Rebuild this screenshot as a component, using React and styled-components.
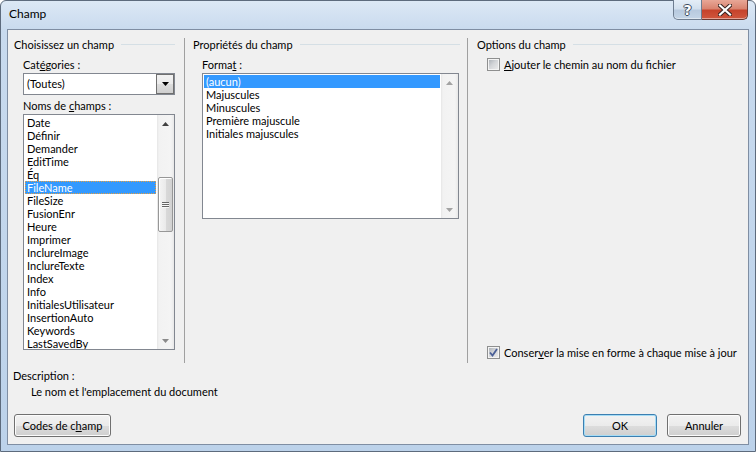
import styled, { createGlobalStyle } from "styled-components";

const GlobalStyle = createGlobalStyle`
  html, body {
    margin: 0;
    padding: 0;
  }
  body {
    width: 756px;
    height: 452px;
    overflow: hidden;
    font-family: Lato, "Noto Sans", sans-serif;
    font-size: 11px;
    color: #000;
  }
  #root {
    width: 756px;
    height: 452px;
  }
`;

const Window = styled.div`
  box-sizing: border-box;
  width: 756px;
  height: 452px;
  display: flex;
  flex-direction: column;
  border: 1px solid #5d6b7d;
  border-radius: 6px 6px 0 0;
  background: linear-gradient(to bottom, #dce8f5 0, #c8daee 30px, #bcd2ea 100%);
  padding: 0 6px 6px 6px;
`;

const TitleBar = styled.div`
  height: 28px;
  display: flex;
  align-items: flex-start;
  justify-content: space-between;
  margin-right: 1px;
`;

const Title = styled.span`
  font-size: 12px;
  line-height: 12px;
  margin: 7px 0 0 2px;
`;

const CaptionGroup = styled.div`
  display: flex;
  margin-top: -1px;
`;

const CaptionButton = styled.div`
  box-sizing: border-box;
  width: ${(p) => (p.$close ? "46px" : "29px")};
  height: 20px;
  display: flex;
  align-items: center;
  justify-content: center;
  border: 1px solid ${(p) => (p.$close ? "#6b3a33" : "#6e7d90")};
  border-top: none;
  border-left: ${(p) => (p.$close ? "none" : undefined)};
  border-radius: ${(p) => (p.$close ? "0 0 5px 0" : "0 0 0 5px")};
  background: ${(p) =>
    p.$close
      ? "linear-gradient(to bottom, #e8a797 0%, #d98470 45%, #c6432c 55%, #d0563d 100%)"
      : "linear-gradient(to bottom, #e4edf7 0%, #d3e0ee 45%, #b8cadf 55%, #c4d5e7 100%)"};
  box-shadow: inset 0 -1px 0 rgba(255, 255, 255, 0.45);
`;

const HelpGlyph = styled.span`
  font-family: "DejaVu Sans", sans-serif;
  font-weight: bold;
  font-size: 14px;
  line-height: 14px;
  color: #fff;
  text-shadow: 1px 0 0 #3b4a5c, -1px 0 0 #3b4a5c, 0 1px 0 #3b4a5c, 0 -1px 0 #3b4a5c;
`;

const Client = styled.div`
  box-sizing: border-box;
  flex: 1;
  display: flex;
  flex-direction: column;
  background: #f0f0f0;
  border: 1px solid #7f8ea3;
`;

const Groups = styled.div`
  display: flex;
  height: 325px;
  margin-top: 8px;
`;

const Group = styled.div`
  width: ${(p) => p.$width}px;
  display: flex;
  flex-direction: column;
`;

const Separator = styled.div`
  width: 1px;
  background: #a0a0a0;
`;

const GroupHeader = styled.div`
  display: flex;
  align-items: center;
  gap: 7px;
  height: 13px;
  line-height: 13px;
  padding-left: ${(p) => p.$left}px;
  padding-right: ${(p) => p.$right}px;
  white-space: nowrap;
  &::after {
    content: "";
    flex: 1;
    height: 1px;
    background: #d5dfe5;
  }
`;

const GroupBody = styled.div`
  flex: 1;
  display: flex;
  flex-direction: column;
  padding-left: ${(p) => p.$left}px;
  padding-right: ${(p) => p.$right}px;
  padding-top: 7px;
  padding-bottom: 4px;
`;

const FieldLabel = styled.div`
  line-height: 13px;
  margin-top: ${(p) => p.$top || 0}px;
  margin-bottom: 2px;
  white-space: nowrap;
`;

const Combo = styled.div`
  box-sizing: border-box;
  height: 22px;
  display: flex;
  align-items: stretch;
  background: #fff;
  border: 1px solid #828790;
`;

const ComboText = styled.div`
  flex: 1;
  padding-left: 3px;
  line-height: 20px;
`;

const ComboButton = styled.div`
  box-sizing: border-box;
  width: 18px;
  display: flex;
  align-items: center;
  justify-content: center;
  border: 1px solid #707070;
  background: linear-gradient(to bottom, #f2f2f2 0%, #ebebeb 50%, #dddddd 51%, #cfcfcf 100%);
`;

const ListBox = styled.div`
  box-sizing: border-box;
  height: ${(p) => p.$height}px;
  display: flex;
  background: #fff;
  border: 1px solid #828790;
  overflow: hidden;
`;

const ListItems = styled.div`
  flex: 1;
  padding: 1px;
  overflow: hidden;
`;

const Item = styled.div`
  box-sizing: border-box;
  height: 13px;
  line-height: 13px;
  padding-left: 2px;
  white-space: nowrap;
  background: ${(p) => (p.$selected ? "#3399ff" : "transparent")};
  color: ${(p) => (p.$selected ? "#fff" : "#000")};
  outline: ${(p) => (p.$focused ? "1px dotted #e8a040" : "none")};
  outline-offset: -1px;
`;

const ScrollBar = styled.div`
  width: 17px;
  display: flex;
  flex-direction: column;
  background: linear-gradient(to right, #e6e6e6 0, #f2f2f2 2px, #f4f4f4 14px, #e8e8e8 100%);
`;

const ScrollArrow = styled.div`
  height: 17px;
  display: flex;
  align-items: center;
  justify-content: center;
`;

const Track = styled.div`
  flex: 1;
  padding-top: ${(p) => p.$offset}px;
`;

const Thumb = styled.div`
  box-sizing: border-box;
  width: 15px;
  height: ${(p) => p.$size}px;
  margin-left: 1px;
  border: 1px solid #979797;
  border-radius: 2px;
  background: linear-gradient(to right, #f4f4f4 0%, #eaeaea 50%, #d9d9d9 51%, #d2d2d2 100%);
  box-shadow: inset 1px 1px 0 #fff;
  display: flex;
  flex-direction: column;
  align-items: center;
  justify-content: center;
  gap: 1px;
`;

const Grip = styled.div`
  width: 7px;
  height: 1px;
  background: #666;
  box-shadow: 0 1px 0 #f8f8f8;
`;

const CheckRow = styled.div`
  display: flex;
  align-items: center;
  gap: 4px;
  height: 13px;
  line-height: 13px;
  padding-left: 10px;
  margin-top: ${(p) => (p.$bottom ? "auto" : "0")};
  white-space: nowrap;
`;

const CheckBox = styled.div`
  box-sizing: border-box;
  width: 13px;
  height: 13px;
  border: 1px solid #8e8f8f;
  background: #f4f4f4;
  padding: 1px;
  display: flex;
`;

const CheckInner = styled.div`
  flex: 1;
  display: flex;
  align-items: center;
  justify-content: center;
  background: linear-gradient(135deg, #aeb3b9 0%, #d3d5d8 45%, #e9e9ea 100%);
`;

const Description = styled.div`
  padding-left: 5px;
  margin-top: 5px;
  line-height: 16px;
`;

const DescText = styled.div`
  padding-left: 18px;
`;

const ButtonRow = styled.div`
  display: flex;
  align-items: center;
  margin-top: 14px;
  padding: 0 7px 0 6px;
  gap: 10px;
`;

const Spacer = styled.div`
  flex: 1;
`;

const Button = styled.div`
  box-sizing: border-box;
  width: ${(p) => p.$width || 74}px;
  height: 23px;
  display: flex;
  align-items: center;
  justify-content: center;
  border: 1px solid ${(p) => (p.$default ? "#3c7fb1" : "#707070")};
  border-radius: 3px;
  background: linear-gradient(to bottom, #f2f2f2 0%, #ebebeb 50%, #dddddd 51%, #cfcfcf 100%);
  box-shadow: inset 0 0 0 1px ${(p) => (p.$default ? "#a6dcf5" : "#fcfcfc")};
  white-space: nowrap;
`;

const Key = styled.span`
  text-decoration: underline;
`;

const Arrow = ({ up, color }) => (
  <svg width="7" height="4" viewBox="0 0 7 4">
    <path d={up ? "M0 4 L3.5 0 L7 4 Z" : "M0 0 L7 0 L3.5 4 Z"} fill={color} />
  </svg>
);

const fieldNames = [
  "Date",
  "Définir",
  "Demander",
  "EditTime",
  "Éq",
  "FileName",
  "FileSize",
  "FusionEnr",
  "Heure",
  "Imprimer",
  "InclureImage",
  "InclureTexte",
  "Index",
  "Info",
  "InitialesUtilisateur",
  "InsertionAuto",
  "Keywords",
  "LastSavedBy",
];

const formats = [
  "(aucun)",
  "Majuscules",
  "Minuscules",
  "Première majuscule",
  "Initiales majuscules",
];

export default function App() {
  return (
    <>
      <GlobalStyle />
      <Window>
        <TitleBar>
          <Title>Champ</Title>
          <CaptionGroup>
            <CaptionButton>
              <HelpGlyph>?</HelpGlyph>
            </CaptionButton>
            <CaptionButton $close>
              <svg width="14" height="12" viewBox="0 0 14 12">
                <path d="M2 1.5 L12 10.5 M12 1.5 L2 10.5" stroke="#3a2522" strokeWidth="4.2" strokeLinecap="square" />
                <path d="M2 1.5 L12 10.5 M12 1.5 L2 10.5" stroke="#fff" strokeWidth="2.2" strokeLinecap="square" />
              </svg>
            </CaptionButton>
          </CaptionGroup>
        </TitleBar>
        <Client>
          <Groups>
            <Group $width={176}>
              <GroupHeader $left={6} $right={9}>Choisissez un champ</GroupHeader>
              <GroupBody $left={15} $right={9}>
                <FieldLabel>
                  Cat<Key>é</Key>gories :
                </FieldLabel>
                <Combo>
                  <ComboText>(Toutes)</ComboText>
                  <ComboButton>
                    <Arrow color="#000" />
                  </ComboButton>
                </Combo>
                <FieldLabel $top={4}>
                  Noms de <Key>c</Key>hamps :
                </FieldLabel>
                <ListBox $height={236}>
                  <ListItems>
                    {fieldNames.map((name) => (
                      <Item key={name} $selected={name === "FileName"} $focused={name === "FileName"}>
                        {name}
                      </Item>
                    ))}
                  </ListItems>
                  <ScrollBar>
                    <ScrollArrow>
                      <Arrow up color="#404040" />
                    </ScrollArrow>
                    <Track $offset={45}>
                      <Thumb $size={55}>
                        <Grip />
                        <Grip />
                        <Grip />
                      </Thumb>
                    </Track>
                    <ScrollArrow>
                      <Arrow color="#8a8a8a" />
                    </ScrollArrow>
                  </ScrollBar>
                </ListBox>
              </GroupBody>
            </Group>
            <Separator />
            <Group $width={282}>
              <GroupHeader $left={8} $right={7}>Propriétés du champ</GroupHeader>
              <GroupBody $left={17} $right={8}>
                <FieldLabel>
                  Forma<Key>t</Key> :
                </FieldLabel>
                <ListBox $height={146}>
                  <ListItems>
                    {formats.map((f) => (
                      <Item key={f} $selected={f === "(aucun)"}>
                        {f}
                      </Item>
                    ))}
                  </ListItems>
                  <ScrollBar>
                    <ScrollArrow>
                      <Arrow up color="#a3a3a3" />
                    </ScrollArrow>
                    <Track $offset={0} />
                    <ScrollArrow>
                      <Arrow color="#a3a3a3" />
                    </ScrollArrow>
                  </ScrollBar>
                </ListBox>
              </GroupBody>
            </Group>
            <Separator />
            <Group $width={279}>
              <GroupHeader $left={9} $right={5}>Options du champ</GroupHeader>
              <GroupBody $left={9} $right={5}>
                <CheckRow>
                  <CheckBox>
                    <CheckInner />
                  </CheckBox>
                  <span>
                    <Key>A</Key>jouter le chemin au nom du fichier
                  </span>
                </CheckRow>
                <CheckRow $bottom>
                  <CheckBox>
                    <CheckInner>
                      <svg width="9" height="9" viewBox="0 0 9 9">
                        <path d="M1 4.5 L3.5 7.5 L8 1" fill="none" stroke="#4a5f97" strokeWidth="1.8" />
                      </svg>
                    </CheckInner>
                  </CheckBox>
                  <span>
                    Conser<Key>v</Key>er la mise en forme à chaque mise à jour
                  </span>
                </CheckRow>
              </GroupBody>
            </Group>
          </Groups>
          <Description>
            <div>Description :</div>
            <DescText>Le nom et l'emplacement du document</DescText>
          </Description>
          <ButtonRow>
            <Button $width={97}>
              Codes de c<Key>h</Key>amp
            </Button>
            <Spacer />
            <Button $default>OK</Button>
            <Button>Annuler</Button>
          </ButtonRow>
        </Client>
      </Window>
    </>
  );
}
